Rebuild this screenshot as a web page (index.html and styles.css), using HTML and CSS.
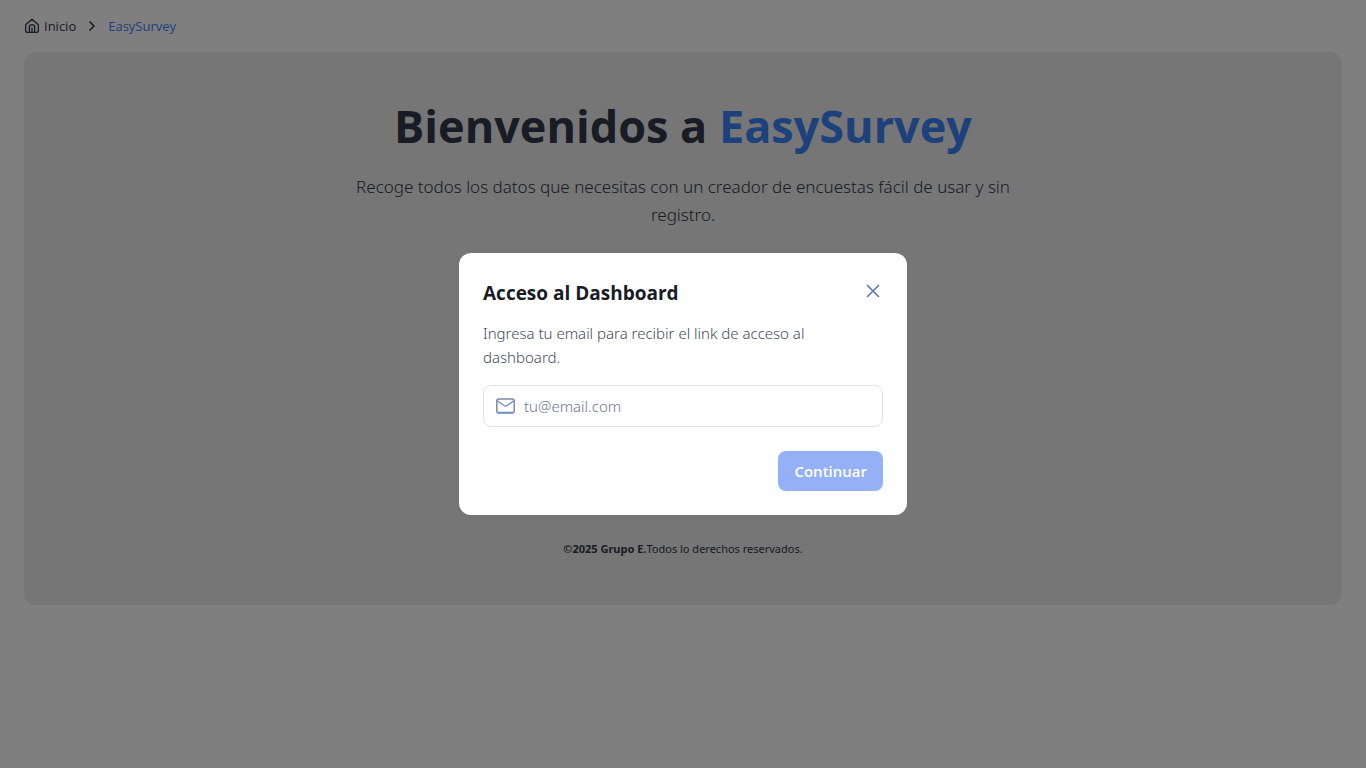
FILE: index.html
```html
<!DOCTYPE html>
<html lang="es">
<head>
<meta charset="utf-8">
<meta name="viewport" content="width=device-width, initial-scale=1">
<title>EasySurvey</title>
<link rel="stylesheet" href="styles.css">
</head>
<body>
<div class="page">
  <nav class="breadcrumb" aria-label="Ruta">
    <a class="crumb" href="#inicio">
      <svg class="crumb-icon" viewBox="0 0 24 24" aria-hidden="true"><path d="M8 21v-7a4 4 0 0 1 8 0v7M12 21v-6"/><path d="M2.500 10 12 2l9.500 8v9.500a2 2 0 0 1-2 2h-15a2 2 0 0 1-2-2z"/></svg>
      Inicio
    </a>
    <svg class="crumb-separator" viewBox="0 0 24 24" aria-hidden="true"><path d="m9 6 6 6-6 6"/></svg>
    <a class="crumb crumb-current" href="#easysurvey" aria-current="page">EasySurvey</a>
  </nav>
  <main class="hero">
    <h1 class="hero-title">Bienvenidos a <span class="brand">EasySurvey</span></h1>
    <p class="hero-text">Recoge todos los datos que necesitas con un creador de encuestas fácil de usar y sin registro.</p>
    <footer class="footer"><strong>©2025 Grupo E.</strong>Todos lo derechos reservados.</footer>
  </main>
</div>
<div class="overlay">
  <form class="modal" role="dialog" aria-modal="true" aria-labelledby="modal-title">
    <header class="modal-header">
      <h2 class="modal-title" id="modal-title">Acceso al Dashboard</h2>
      <button class="close" type="button" aria-label="Cerrar"><svg class="icon icon-close" viewBox="0 0 20 20" aria-hidden="true"><path d="m4.500 4.500 11 11M15.500 4.500l-11 11"/></svg></button>
    </header>
    <label class="modal-text" for="email">Ingresa tu email para recibir el link de acceso al dashboard.</label>
    <div class="field">
      <svg class="icon icon-mail" viewBox="0 0 20 20" aria-hidden="true"><rect x="0.800" y="3" width="17.400" height="14" rx="2"/><path class="flap" d="m1.500 5 6.500 4.500a2.600 2.600 0 0 0 3 0L17.500 5M2 16.500h15"/></svg>
      <input class="input" id="email" type="email" placeholder="tu@email.com">
    </div>
    <button class="submit" type="submit" disabled>Continuar</button>
  </form>
</div>
</body>
</html>
```
FILE: styles.css
```css
* { box-sizing: border-box; }
body {
  margin: 0;
  font-family: "Noto Sans", "Open Sans", sans-serif;
  font-size: 15px;
  color: #303848;
  background: #fff;
}
svg {
  fill: none;
  stroke: currentColor;
  stroke-linecap: round;
  stroke-linejoin: round;
}
.page { padding: 16px 24px; }
.breadcrumb {
  display: flex;
  align-items: center;
  gap: 8px;
  height: 20px;
  margin-bottom: 16px;
  font-family: "Open Sans", "Noto Sans", sans-serif;
  font-size: 13px;
  line-height: 20px;
}
.crumb {
  display: flex;
  align-items: center;
  gap: 4px;
  color: inherit;
  text-decoration: none;
}
.crumb-current { color: #3b82f6; }
.crumb-icon { width: 16px; height: 16px; stroke-width: 2; }
.crumb-separator { width: 16px; height: 16px; stroke-width: 2.5; }
.hero {
  padding: 48px 24px;
  border-radius: 12px;
  background: #ececec;
  text-align: center;
}
.hero-title {
  margin: 0 0 21px;
  font-family: "Open Sans", "Noto Sans", sans-serif;
  font-size: 45px;
  line-height: 52px;
  font-weight: 700;
}
.brand { color: #3b82f6; }
.hero-text {
  max-width: 684px;
  margin: 0 auto;
  font-size: 17px;
  line-height: 28px;
  font-weight: 300;
}
.footer {
  margin-top: 311px;
  font-size: 11px;
  line-height: 17px;
}
.overlay {
  position: fixed;
  inset: 0;
  display: flex;
  align-items: center;
  justify-content: center;
  background: rgba(0, 0, 0, 0.5);
}
.modal {
  display: flex;
  flex-direction: column;
  width: 100%;
  max-width: 448px;
  padding: 24px;
  border-radius: 12px;
  background: #fff;
}
.modal-header {
  display: flex;
  justify-content: space-between;
  align-items: flex-start;
  margin-bottom: 12px;
}
.modal-title {
  margin: 0;
  font-family: "Open Sans", "Noto Sans", sans-serif;
  font-size: 19px;
  line-height: 32px;
  font-weight: 700;
  color: #171c26;
}
.close {
  display: flex;
  padding: 4px 0;
  border: 0;
  background: none;
  color: #6479b0;
}
.icon { flex: none; width: 20px; height: 20px; }
.icon-close { stroke-width: 1.7; }
.icon-mail { stroke-width: 1.5; }
.flap { stroke: #7590d0; }
.modal-text {
  margin-bottom: 16px;
  line-height: 24px;
  font-weight: 300;
  color: #3f4b5c;
}
.field {
  display: flex;
  align-items: center;
  gap: 8px;
  padding: 0 12px;
  height: 42px;
  margin-bottom: 24px;
  border: 1px solid #e2e4ea;
  border-radius: 8px;
  color: #7f89a0;
}
.input {
  flex: 1;
  min-width: 0;
  padding: 0;
  border: 0;
  outline: 0;
  background: none;
  font: inherit;
  font-weight: 300;
}
.input::placeholder { color: #6b7895; }
.submit {
  align-self: flex-end;
  padding: 8px 16px;
  border: 0;
  border-radius: 8px;
  background: #94b0f6;
  color: #fff;
  font-family: "Open Sans", "Noto Sans", sans-serif;
  font-size: 15px;
  font-weight: 600;
  line-height: 24px;
}
```
